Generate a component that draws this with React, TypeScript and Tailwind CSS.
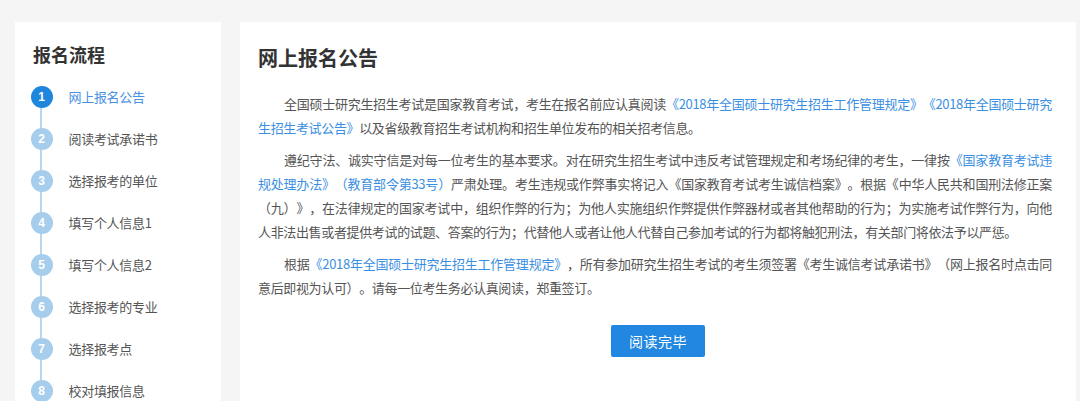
import React from "react";

const steps = [
  "网上报名公告",
  "阅读考试承诺书",
  "选择报考的单位",
  "填写个人信息1",
  "填写个人信息2",
  "选择报考的专业",
  "选择报考点",
  "校对填报信息",
];

const L = ({ children }: { children: React.ReactNode }) => (
  <span className="text-[#3b8fe2]">{children}</span>
);

const Line = ({
  children,
  last,
  indent,
}: {
  children: React.ReactNode;
  last?: boolean;
  indent?: boolean;
}) => (
  <div
    className={`${last ? "text-left" : "text-justify [text-align-last:justify]"} ${
      indent ? "pl-[26px]" : ""
    } whitespace-nowrap`}
  >
    {children}
  </div>
);

export default function App() {
  return (
    <div
      className="w-[1080px] h-[401px] overflow-hidden bg-[#f5f5f5] flex gap-[19px] pl-[15px] pt-[22px] [text-spacing-trim:space-all] [font-feature-settings:'chws'_0,'halt'_0]"
      style={{ fontFamily: '"Noto Sans CJK SC", "Noto Sans", sans-serif' }}
    >
      <div className="w-[206px] shrink-0 bg-white pl-[16px] pt-[20px] h-[420px]">
        <div className="ml-[2px] text-[18px] leading-[24px] font-bold text-[#333]">报名流程</div>
        <div className="relative mt-[10px]">
          <div className="absolute left-[10px] top-[21px] bottom-0 w-[2px] -ml-[1px] bg-[#b9d6ee]" />
          {steps.map((s, i) => (
            <div key={s} className="relative flex items-center h-[42px]">
              <div
                className={`w-[22px] h-[22px] -ml-[0.5px] rounded-full flex items-center justify-center text-[12px] font-bold text-white ${
                  i === 0 ? "bg-[#1f86de]" : "bg-[#a6cdec]"
                }`}
                style={{ fontFamily: '"Liberation Sans", Arial, sans-serif' }}
              >
                {i + 1}
              </div>
              <div
                className={`ml-[16px] text-[13px] tracking-[-0.3px] ${
                  i === 0 ? "text-[#4a90e2]" : "text-[#555]"
                }`}
              >
                {s}
              </div>
            </div>
          ))}
        </div>
      </div>

      <div className="w-[836px] shrink-0 bg-white px-[18px] pt-[22px] h-[420px]">
        <div className="text-[20px] leading-[28px] font-bold text-[#333]">网上报名公告</div>
        <div className="mt-[20px] mr-[6px] text-[13px] leading-[24px] tracking-[-0.35px] text-[#555]">
          <div>
            <Line indent>
              全国硕士研究生招生考试是国家教育考试，考生在报名前应认真阅读
              <L>《2018年全国硕士研究生招生工作管理规定》《2018年全国硕士研究</L>
            </Line>
            <Line last>
              <L>生招生考试公告》</L>以及省级教育招生考试机构和招生单位发布的相关招考信息。
            </Line>
          </div>
          <div className="mt-[8px]">
            <Line indent>
              遵纪守法、诚实守信是对每一位考生的基本要求。对在研究生招生考试中违反考试管理规定和考场纪律的考生，一律按
              <L>《国家教育考试违</L>
            </Line>
            <Line>
              <L>规处理办法》（教育部令第33号）</L>
              严肃处理。考生违规或作弊事实将记入《国家教育考试考生诚信档案》。根据《中华人民共和国刑法修正案
            </Line>
            <Line>
              （九）》，在法律规定的国家考试中，组织作弊的行为；为他人实施组织作弊提供作弊器材或者其他帮助的行为；为实施考试作弊行为，向他
            </Line>
            <Line last>
              人非法出售或者提供考试的试题、答案的行为；代替他人或者让他人代替自己参加考试的行为都将触犯刑法，有关部门将依法予以严惩。
            </Line>
          </div>
          <div className="mt-[8px]">
            <Line indent>
              根据<L>《2018年全国硕士研究生招生工作管理规定》</L>
              ，所有参加研究生招生考试的考生须签署《考生诚信考试承诺书》（网上报名时点击同
            </Line>
            <Line last>意后即视为认可）。请每一位考生务必认真阅读，郑重签订。</Line>
          </div>
        </div>
        <div className="flex justify-center mt-[25px]">
          <button className="w-[94px] h-[32px] rounded-[2px] bg-[#2187e0] text-white text-[14px] tracking-[0.5px]">
            阅读完毕
          </button>
        </div>
      </div>
    </div>
  );
}
